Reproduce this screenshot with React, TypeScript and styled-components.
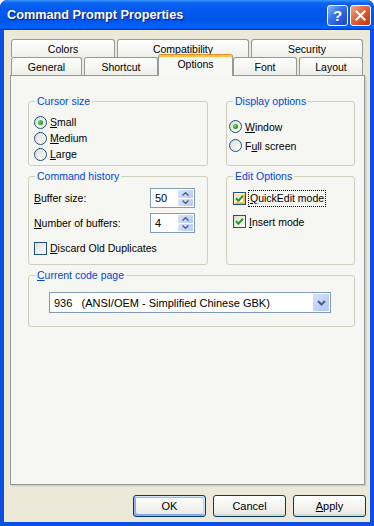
import React from "react";
import styled, { createGlobalStyle, css } from "styled-components";

const GlobalStyle = createGlobalStyle`
  html, body { margin: 0; padding: 0; }
  body {
    background: #ffffff;
    font-family: "Liberation Sans", Arial, sans-serif;
    font-size: 10.5px;
    color: #000000;
  }
  * { box-sizing: border-box; }
`;

const Window = styled.div`
  width: 374px;
  height: 526px;
  display: flex;
  flex-direction: column;
  overflow: hidden;
  background: #0831d9;
  border-radius: 7px 7px 0 0;
`;

const TitleBar = styled.div`
  height: 30px;
  flex: none;
  display: flex;
  align-items: center;
  gap: 2px;
  padding: 0 3px 0 7px;
  background: linear-gradient(
    180deg,
    #3d95ff 0%,
    #0a64f0 10%,
    #0058ee 35%,
    #0055e8 70%,
    #0062f8 88%,
    #005bff 94%,
    #003dd7 97%,
    #003dd7 100%
  );
  border-radius: 7px 7px 0 0;
`;

const Title = styled.div`
  flex: 1;
  color: #ffffff;
  font-family: "Liberation Sans", Arial, sans-serif;
  font-weight: bold;
  font-size: 12.7px;
  text-shadow: 1px 1px #0a1883;
  white-space: nowrap;
`;

const CaptionButton = styled.div<{ $kind: "help" | "close" }>`
  width: 21px;
  height: 21px;
  border: 1px solid #ffffff;
  border-radius: 3px;
  display: flex;
  align-items: center;
  justify-content: center;
  color: #ffffff;
  font-weight: bold;
  font-size: 15px;
  ${(p) =>
    p.$kind === "help"
      ? css`
          background: linear-gradient(135deg, #8fb4fa 0%, #3b74e8 40%, #2457d6 75%, #1c48c4 100%);
        `
      : css`
          background: linear-gradient(135deg, #f2a68e 0%, #e46a44 40%, #d3451d 75%, #c4360f 100%);
        `}
`;

const Body = styled.div`
  flex: 1;
  display: flex;
  flex-direction: column;
  background: #ece9d8;
  border-style: solid;
  border-color: #0b4fe4;
  border-width: 0 4px 4px 4px;
  padding: 9px 5px 5px 6px;
`;

const TabRow = styled.div`
  display: flex;
  align-items: flex-end;
  gap: 2px;
  height: 18px;
  padding-left: 1px;
  flex: none;
`;

const Tab = styled.div<{ $w: number; $active?: boolean }>`
  flex: none;
  width: ${(p) => p.$w}px;
  height: 18px;
  display: flex;
  align-items: center;
  justify-content: center;
  border: 1px solid #919b9c;
  border-bottom: none;
  border-radius: 3px 3px 0 0;
  background: linear-gradient(180deg, #ffffff, #fafaf9 26%, #f0f0ea 95%, #ecebe5);
  white-space: nowrap;
  ${(p) =>
    p.$active &&
    css`
      height: 22px;
      margin: 0 -2px -1px -2px;
      padding-bottom: 3px;
      position: relative;
      z-index: 1;
      background: #f8f8f6;
      border-top-color: #e68b2c;
      box-shadow: inset 0 2px #ffc73c;
    `}
`;

const Panel = styled.div`
  flex: none;
  height: 410px;
  border: 1px solid #919b9c;
  background: #f6f6f3;
  box-shadow: 1px 1px #d0d0bf, 2px 2px #e3e0d2;
  padding: 19px 10px 0 17px;
  display: grid;
  grid-template-columns: 180px 129px;
  grid-template-rows: 71px 95px 58px;
  column-gap: 18px;
  row-gap: 4px;
`;

const Group = styled.fieldset<{ $span?: boolean }>`
  margin: 0;
  padding: 0;
  min-width: 0;
  height: 100%;
  border: 1px solid #d0d0bf;
  border-radius: 3px;
  ${(p) => p.$span && css`grid-column: 1 / span 2;`}
`;

const Legend = styled.legend`
  color: #0046d5;
  padding: 0 2px;
  margin-left: 6px;
  line-height: 13px;
  height: 13px;
`;

const GroupContent = styled.div<{ $pt: number; $pl: number; $gap?: number }>`
  display: flex;
  flex-direction: column;
  gap: ${(p) => p.$gap ?? 0}px;
  padding-top: ${(p) => p.$pt}px;
  padding-left: ${(p) => p.$pl}px;
`;

const OptionRow = styled.div<{ $h: number; $mt?: number }>`
  display: flex;
  align-items: center;
  gap: 3px;
  height: ${(p) => p.$h}px;
  margin-top: ${(p) => p.$mt ?? 0}px;
  white-space: nowrap;
`;

const RadioCircle = styled.span<{ $checked?: boolean }>`
  flex: none;
  width: 13px;
  height: 13px;
  border-radius: 50%;
  border: 1px solid #1c5180;
  background: linear-gradient(135deg, #dcdcd7, #ffffff);
  display: flex;
  align-items: center;
  justify-content: center;
  &::after {
    content: "";
    display: ${(p) => (p.$checked ? "block" : "none")};
    width: 5px;
    height: 5px;
    border-radius: 50%;
    background: radial-gradient(circle at 35% 35%, #6fe06b, #21a121 60%, #1a8a1a);
  }
`;

const CheckBox = styled.span<{ $hot?: boolean }>`
  flex: none;
  width: 13px;
  height: 13px;
  border: 1px solid #1c5180;
  background: linear-gradient(135deg, #dcdcd7, #ffffff);
  display: flex;
  align-items: center;
  justify-content: center;
  ${(p) =>
    p.$hot &&
    css`
      box-shadow: inset 1px 1px #fff0cf, inset -1px -1px #f8b33a, inset 2px 2px #fce3a6, inset -2px -2px #f9c45e;
    `}
`;

const Key = styled.span`
  text-decoration: underline;
  text-underline-offset: 1px;
`;

const FocusLabel = styled.span`
  outline: 1px dotted #000000;
  outline-offset: 0;
  padding: 1px 1px;
  line-height: 13px;
`;

const FieldRow = styled.div<{ $mt?: number }>`
  display: grid;
  grid-template-columns: 116px 45px;
  align-items: center;
  height: 20px;
  margin-top: ${(p) => p.$mt ?? 0}px;
  white-space: nowrap;
`;

const Spinner = styled.div`
  width: 45px;
  height: 20px;
  border: 1px solid #7f9db9;
  background: #ffffff;
  display: flex;
  padding: 1px;
`;

const SpinValue = styled.div`
  flex: 1;
  padding-left: 3px;
  line-height: 16px;
  font-size: 11px;
`;

const SpinButtons = styled.div`
  width: 15px;
  display: flex;
  flex-direction: column;
  gap: 1px;
`;

const SpinHalf = styled.div`
  flex: 1;
  display: flex;
  align-items: center;
  justify-content: center;
  border-radius: 1px;
  background: linear-gradient(135deg, #dae4fc, #b6c8f6);
`;

const Combo = styled.div`
  width: 282px;
  height: 21px;
  border: 1px solid #7f9db9;
  background: #ffffff;
  display: flex;
  align-items: center;
  padding: 1px;
`;

const ComboText = styled.div`
  flex: 1;
  padding-left: 3px;
  white-space: pre;
  font-size: 11px;
`;

const DropButton = styled.div`
  width: 16px;
  height: 17px;
  border-radius: 1px;
  display: flex;
  align-items: center;
  justify-content: center;
  background: linear-gradient(135deg, #d6e1fc, #b2c5f5);
`;

const ButtonRow = styled.div`
  display: flex;
  justify-content: flex-end;
  gap: 7px;
  margin-top: 10px;
  margin-right: -1px;
`;

const DialogButton = styled.div<{ $default?: boolean }>`
  width: 73px;
  height: 22px;
  border: 1px solid #003c74;
  border-radius: 3px;
  background: linear-gradient(180deg, #ffffff, #ecebe6 86%, #d6d0c5);
  display: flex;
  align-items: center;
  justify-content: center;
  font-size: 11px;
  ${(p) =>
    p.$default &&
    css`
      box-shadow: inset -1px 1px #cee7ff, inset 1px 2px #98b8ea, inset -2px 2px #bcd4f6,
        inset 1px -1px #89ade4, inset 2px -2px #89ade4;
    `}
`;

const Check = () => (
  <svg width="9" height="9" viewBox="0 0 9 9">
    <polyline points="1,4.2 3.4,6.8 8,1.8" fill="none" stroke="#21a121" strokeWidth="2" />
  </svg>
);

const Arrow = ({ up }: { up?: boolean }) => (
  <svg width="7" height="4" viewBox="0 0 7 4">
    <polyline
      points={up ? "0.5,3.5 3.5,0.7 6.5,3.5" : "0.5,0.5 3.5,3.3 6.5,0.5"}
      fill="none"
      stroke="#4d6185"
      strokeWidth="1.4"
    />
  </svg>
);

const SpinBox = ({ value }: { value: string }) => (
  <Spinner>
    <SpinValue>{value}</SpinValue>
    <SpinButtons>
      <SpinHalf>
        <Arrow up />
      </SpinHalf>
      <SpinHalf>
        <Arrow />
      </SpinHalf>
    </SpinButtons>
  </Spinner>
);

export default function App() {
  return (
    <>
      <GlobalStyle />
      <Window>
        <TitleBar>
          <Title>Command Prompt Properties</Title>
          <CaptionButton $kind="help">?</CaptionButton>
          <CaptionButton $kind="close">
            <svg width="11" height="11" viewBox="0 0 11 11">
              <path d="M1.5 1.5 L9.5 9.5 M9.5 1.5 L1.5 9.5" stroke="#ffffff" strokeWidth="2" strokeLinecap="square" />
            </svg>
          </CaptionButton>
        </TitleBar>
        <Body>
          <TabRow>
            <Tab $w={104}>Colors</Tab>
            <Tab $w={132}>Compatibility</Tab>
            <Tab $w={112}>Security</Tab>
          </TabRow>
          <TabRow>
            <Tab $w={71}>General</Tab>
            <Tab $w={74}>Shortcut</Tab>
            <Tab $w={75} $active>
              Options
            </Tab>
            <Tab $w={64}>Font</Tab>
            <Tab $w={64}>Layout</Tab>
          </TabRow>
          <Panel>
            <Group>
              <Legend>Cursor size</Legend>
              <GroupContent $pt={6} $pl={5}>
                <OptionRow $h={16}>
                  <RadioCircle $checked />
                  <span>
                    <Key>S</Key>mall
                  </span>
                </OptionRow>
                <OptionRow $h={16}>
                  <RadioCircle />
                  <span>
                    <Key>M</Key>edium
                  </span>
                </OptionRow>
                <OptionRow $h={16}>
                  <RadioCircle />
                  <span>
                    <Key>L</Key>arge
                  </span>
                </OptionRow>
              </GroupContent>
            </Group>
            <Group>
              <Legend>Display options</Legend>
              <GroupContent $pt={9} $pl={2}>
                <OptionRow $h={19}>
                  <RadioCircle $checked />
                  <span>
                    <Key>W</Key>indow
                  </span>
                </OptionRow>
                <OptionRow $h={19}>
                  <RadioCircle />
                  <span>
                    F<Key>u</Key>ll screen
                  </span>
                </OptionRow>
              </GroupContent>
            </Group>
            <Group>
              <Legend>Command history</Legend>
              <GroupContent $pt={5} $pl={5}>
                <FieldRow>
                  <span>
                    <Key>B</Key>uffer size:
                  </span>
                  <SpinBox value="50" />
                </FieldRow>
                <FieldRow $mt={5}>
                  <span>
                    <Key>N</Key>umber of buffers:
                  </span>
                  <SpinBox value="4" />
                </FieldRow>
                <OptionRow $h={16} $mt={7}>
                  <CheckBox />
                  <span>
                    <Key>D</Key>iscard Old Duplicates
                  </span>
                </OptionRow>
              </GroupContent>
            </Group>
            <Group>
              <Legend>Edit Options</Legend>
              <GroupContent $pt={7} $pl={6} $gap={6}>
                <OptionRow $h={17}>
                  <CheckBox $hot>
                    <Check />
                  </CheckBox>
                  <FocusLabel>
                    <Key>Q</Key>uickEdit mode
                  </FocusLabel>
                </OptionRow>
                <OptionRow $h={17}>
                  <CheckBox>
                    <Check />
                  </CheckBox>
                  <span>
                    <Key>I</Key>nsert mode
                  </span>
                </OptionRow>
              </GroupContent>
            </Group>
            <Group $span>
              <Legend>
                <Key>C</Key>urrent code page
              </Legend>
              <GroupContent $pt={10} $pl={20}>
                <Combo>
                  <ComboText>{"936   (ANSI/OEM - Simplified Chinese GBK)"}</ComboText>
                  <DropButton>
                    <svg width="9" height="6" viewBox="0 0 9 6">
                      <polyline points="1,1 4.5,4.5 8,1" fill="none" stroke="#4d6185" strokeWidth="2" />
                    </svg>
                  </DropButton>
                </Combo>
              </GroupContent>
            </Group>
          </Panel>
          <ButtonRow>
            <DialogButton $default>OK</DialogButton>
            <DialogButton>Cancel</DialogButton>
            <DialogButton>
              <span>
                <Key>A</Key>pply
              </span>
            </DialogButton>
          </ButtonRow>
        </Body>
      </Window>
    </>
  );
}
